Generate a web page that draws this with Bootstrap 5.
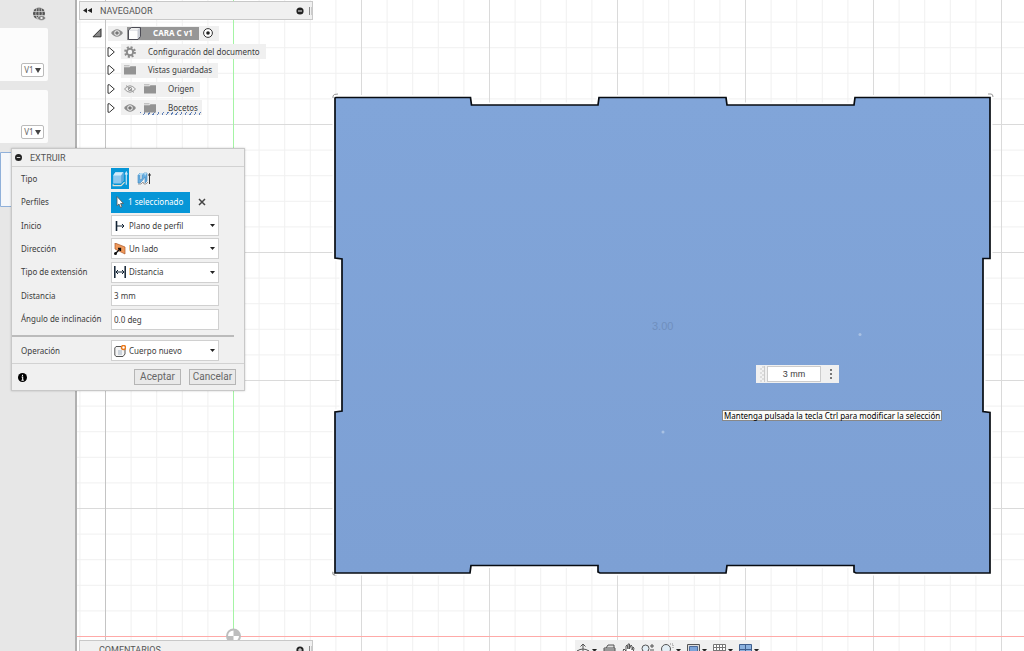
<!DOCTYPE html>
<html lang="es">
<head>
<meta charset="utf-8">
<meta name="viewport" content="width=device-width, initial-scale=1">
<title>CARA C v1</title>
<link href="https://cdn.jsdelivr.net/npm/bootstrap@5.3.0/dist/css/bootstrap.min.css" rel="stylesheet">
<style>
  :root { --edge: #c8c8c8; --face: #f0f0f0; --accent: #0696d7; --ink: #3c3c3c; }
  body { font-family: "Noto Sans", "Liberation Sans", sans-serif; font-size: 8px; line-height: 12px; color: var(--ink); background: #fff; }
  svg { display: block; flex: none; }
  button, input, select { font: inherit; color: inherit; }
  .bare { background: none; border: 0; padding: 0; }
  .data-panel { width: 77px; background: #e7e7e7; border-right: 2px solid #b0b0b0; padding-top: 7px; }
  .globe { margin: 0 0 6px 32px; }
  .design-tile { width: 48px; height: 53px; background: #fcfcfc; border-radius: 0 2px 2px 0; margin-bottom: 9px; padding: 0 4px 4px 0; }
  .design-tile.active-tile { width: 60px; height: 55px; background: #f5f7fa; border: 1px solid #8fb0da; }
  .version { width: 23px; height: 14px; border: 1px solid #bbb; border-radius: 2px; background: #fff; color: #666; gap: 1px; }
  .scene { inset: 0; width: 100%; height: 100%; }
  .browser { margin-top: 1px; }
  .strip { width: 234px; height: 19px; margin-left: 2px; padding: 0 0 0 3px; background: var(--face); border: 1px solid var(--edge); color: #555; }
  .strip, .palette-head { font-family: Roboto, sans-serif; font-size: 9px; }
  .grip { width: 3px; height: 8px; border-left: 1px solid #888; border-right: 1px solid #ccc; margin-left: 5px; }
  .tree { list-style: none; margin: 4px 0 0 15px; padding: 0; display: grid; grid-template-rows: repeat(5, 1fr); height: 93px; }
  .tree li { display: flex; align-items: center; }
  .tree .chip { display: flex; align-items: center; height: 15px; background: var(--face); padding: 0 6px 0 3px; margin-left: 6px; }
  .tree .child { margin-left: 15px; }
  .root-name { background: #969696; color: #fff; font-weight: 700; height: 13px; padding-right: 6px; }
  .bocetos { align-self: stretch; background: repeating-linear-gradient(120deg, #5f80b8 0 1px, transparent 1px 4px) bottom / 100% 3px no-repeat; }
  .palette { left: 11px; top: 148px; width: 234px; background: var(--face); border: 1px solid var(--edge); box-shadow: 0 0 2px #0003; z-index: 5; }
  .palette-head { height: 18px; padding-left: 3px; border-bottom: 1px solid #d2d2d2; color: #555; }
  .fields { display: grid; grid-template-rows: repeat(7, 1fr); height: 164px; }
  .field { display: grid; grid-template-columns: 90px 108px; align-items: center; padding-left: 9px; }
  .box { height: 21px; border: 1px solid #d0d0d0; background: #fff; padding: 0 2px; width: 100%; display: flex; align-items: center; border-radius: 0; }
  .box select { appearance: none; border: 0; padding: 0 0 0 3px; flex: 1; min-width: 0; height: 16px; background: #fff url("data:image/svg+xml,%3Csvg xmlns='http://www.w3.org/2000/svg' viewBox='0 0 5 3'%3E%3Cpath d='M0 0h5L2.5 3z' fill='%23222'/%3E%3C/svg%3E") right 1px center / 5px 3px no-repeat; }
  .rule-bar { height: 2px; background: #bbb; width: 222px; margin-bottom: 3px; }
  .tool-on { background: var(--accent); width: 18px; height: 21px; }
  .pick { background: var(--accent); color: #fff; width: 79px; height: 21px; padding-left: 5px; }
  .palette-foot { height: 27px; border-top: 1px solid #d2d2d2; margin-top: 2px; padding: 0 8px 0 6px; }
  .act { font: 10px/12px Roboto, sans-serif; height: 16px; width: 47px; border: 1px solid #b5b5b5; background: #e9e9e9; padding: 0; color: #666; }
  .bottom-edge { height: 11px; overflow: hidden; }
  .view-tools { background: var(--face); height: 20px; margin-left: 262px; padding: 3px 1px; gap: 6px; }
  .view-tools button { gap: 2px; }
  .dim-entry { left: 679px; top: 365px; width: 83px; height: 18px; background: #f0f0f0; padding-left: 4px; font-family: "Liberation Sans", sans-serif; font-size: 9px; }
  .dim-entry input { width: 54px; height: 16px; border: 1px solid #ccc; text-align: center; padding: 0; background: #fff; margin-left: 2px; }
  .dots { width: 5px; height: 16px; background: repeating-conic-gradient(#ddd 0 25%, #f2f2f2 0 50%) 0 0 / 4px 4px; border-right: 1px solid #ccc; }
  .hint { left: 645px; top: 410px; border: 1px solid #888; background: #fbfbf8; color: #000; font-size: 8px; line-height: 9px; padding: 0 1px; height: 11px; white-space: nowrap; }
</style>
<script src="https://cdn.jsdelivr.net/npm/bootstrap@5.3.0/dist/js/bootstrap.bundle.min.js"></script>
</head>
<body>
<svg width="0" height="0" class="position-absolute" aria-hidden="true">
  <defs>
    <symbol id="eye" viewBox="0 0 12 8"><path d="M0 4Q6-3.500 12 4Q6 11.500 0 4z" fill="#8c8c8c"/><circle cx="6" cy="4" r="2.700" fill="#eee"/><circle cx="6" cy="4" r="1.800" fill="#777"/></symbol>
    <symbol id="eye-off" viewBox="0 0 12 8"><path d="M.5 4Q6-2.500 11.500 4Q6 10.500 .5 4zM2 .5l8 7" fill="none" stroke="#999"/><circle cx="6" cy="4" r="1.700" fill="none" stroke="#999"/></symbol>
    <symbol id="folder" viewBox="0 0 13 10"><path d="M0 0h6v1H0zM0 2h6l1-1h6v9H0z" fill="#939393"/></symbol>
    <symbol id="tri" viewBox="0 0 8 10"><path d="M1 .8h1.500L7.300 5 2.500 9.200H1z" fill="#fff" stroke="#333"/></symbol>
    <symbol id="down" viewBox="0 0 5 3"><path d="M0 0h5L2.500 3z" fill="#222"/></symbol>
  </defs>
</svg>
<div class="d-flex vh-100 position-relative overflow-hidden">
  <aside class="data-panel flex-shrink-0">
    <svg class="globe" width="15" height="15" viewBox="0 0 15 15"><circle cx="7" cy="6.500" r="6" fill="#555"/><path d="M1 4.500h12M1 8.500h12M5 .5q-2.500 6 0 12M9 .5q2.500 6 0 12M7 0v13" stroke="#ddd" stroke-width=".7" fill="none"/><path d="M5 11q4.500-5 9 0q-4.500 5-9 0z" fill="#777" stroke="#e7e7e7" stroke-width=".7"/><circle cx="9.500" cy="11" r="1.200" fill="#eee"/></svg>
    <div class="design-tile d-flex align-items-end justify-content-end"><button class="version p-0 d-flex align-items-center justify-content-center">V1<svg width="6" height="5" viewBox="0 0 6 5"><path d="M0 0h6L3 5z" fill="#444"/></svg></button></div>
    <div class="design-tile d-flex align-items-end justify-content-end"><button class="version p-0 d-flex align-items-center justify-content-center">V1<svg width="6" height="5" viewBox="0 0 6 5"><path d="M0 0h6L3 5z" fill="#444"/></svg></button></div>
    <div class="design-tile active-tile"></div>
  </aside>

  <main class="flex-grow-1 position-relative d-flex flex-column overflow-hidden">
    <svg class="scene position-absolute" role="img" aria-label="Boceto">
      <defs>
        <pattern id="minor" x="156" y="636" width="25.600" height="25.600" patternUnits="userSpaceOnUse"><path d="M.5 0v25.600M0 .5h25.600" stroke="#f0f0f0"/></pattern>
        <pattern id="major" x="156" y="636" width="128" height="128" patternUnits="userSpaceOnUse"><path d="M.5 0v128M0 .5h128" stroke="#dadada"/></pattern>
        <linearGradient id="sheet" x1="0" y1="0" x2="0" y2="1"><stop offset="0" stop-color="#81a5d9"/><stop offset="1" stop-color="#7da0d4"/></linearGradient>
      </defs>
      <rect width="100%" height="100%" fill="url(#minor)"/>
      <rect width="100%" height="100%" fill="url(#major)"/>
      <path d="M28.500 0v651" stroke="#c4c4c4"/>
      <path d="M156.500 0v636" stroke="#a4f4a4"/>
      <path d="M0 636.500h3000" stroke="#ffaaa8"/>
      <circle cx="156.500" cy="636" r="7.500" fill="#bdbdbd"/><path d="M156.500 636v-5.500a5.500 5.500 0 0 0-5.500 5.500zM156.500 636v5.500a5.500 5.500 0 0 0 5.500-5.500z" fill="#fff"/>
      <g fill="#fff" stroke="#999"><circle cx="258" cy="573" r="2.500"/></g>
      <path d="M258 97.500H393.500L394.500 105H521L522 97.500H649L650 105H777L778 97.500H913V258.500H906V411.500L913 412.500V572.500L912 573H779L777 572V565.500H650L649 572.500L648 573H523L521 572V565.500H394L393 572.500L392 573H258V412L265 411V259L258 258z" fill="url(#sheet)" stroke="#fff" stroke-width="5"/>
      <path d="M259 97.500H393.500L394.500 105H521L522 97.500H649L650 105H777L778 97.500H913V258.500H906V411.500L913 412.500V573H779L777 572V565.500H650L649 573H523L521 572V565.500H394L393 573H258V412L265 411V259L258 258V98z" fill="url(#sheet)" stroke="#080c12" stroke-width="1.700"/>
      <path d="M256 98v-2q0-2 5-2M911 94h3q2 0 2 3M256 572q-1 3 2 3" stroke="#999" fill="none"/>
      <path d="M586 432V565" stroke="#83a5d6" opacity=".4"/>
      <circle cx="783" cy="334.500" r="1.500" fill="#a9c1e3"/><circle cx="586" cy="432" r="1.500" fill="#a9c1e3"/>
      <text x="575" y="330" font-size="11" font-family="Liberation Sans, sans-serif" fill="#6f8fbe">3.00</text>
    </svg>

    <section class="browser position-relative">
      <header class="strip d-flex align-items-center">
        <button class="bare" aria-label="Contraer"><svg width="9" height="5" viewBox="0 0 9 5"><path d="M4 0v5L0 2.500zM9 0v5L4.500 2.500z" fill="#222"/></svg></button>
        <span class="ms-2 ps-0 flex-grow-1">NAVEGADOR</span>
        <svg width="8" height="8" viewBox="0 0 8 8"><circle cx="4" cy="4" r="3.600" fill="#222"/><path d="M2 4h4" stroke="#eee"/></svg><span class="grip"></span>
      </header>
      <ul class="tree">
        <li><svg width="10" height="10" viewBox="0 0 10 10"><path d="M9 .8v8H1z" fill="#888" stroke="#333"/></svg>
          <div class="chip"><svg class="me-1" width="12" height="8"><use href="#eye"/></svg><span class="root-name d-flex align-items-center"><svg class="me-2" width="14" height="13" viewBox="0 0 14 13"><path d="M1.500 3l3-2.500h9v9L11 12.500H1.500z" fill="#c9ccd4" stroke="#4c4c55"/><path d="M2 3.500h8.500V12H2z" fill="#fdfdfd"/><path d="M2.500 3l2-2h8l-2 2z" fill="#eee"/></svg><span class="ms-1">CARA C v1</span></span><svg class="ms-1" width="10" height="10" viewBox="0 0 10 10"><circle cx="5" cy="5" r="4.400" fill="#fff" stroke="#333"/><circle cx="5" cy="5" r="1.800" fill="#222"/></svg></div></li>
        <li class="child"><svg width="8" height="10"><use href="#tri"/></svg><div class="chip"><svg width="12" height="12" viewBox="0 0 12 12"><circle cx="6" cy="6" r="4.800" fill="none" stroke="#8c8c8c" stroke-width="2.200" stroke-dasharray="2 1.770"/><circle cx="6" cy="6" r="3.200" fill="#f5f5f5" stroke="#8c8c8c" stroke-width="2"/></svg><span class="ps-2 ms-1">Configuración del documento</span></div></li>
        <li class="child"><svg width="8" height="10"><use href="#tri"/></svg><div class="chip"><svg width="12" height="10"><use href="#folder"/></svg><span class="ps-2 ms-1">Vistas guardadas</span></div></li>
        <li class="child"><svg width="8" height="10"><use href="#tri"/></svg><div class="chip"><svg width="12" height="8"><use href="#eye-off"/></svg><svg class="ms-2" width="12" height="10"><use href="#folder"/></svg><span class="ps-2 ms-1">Origen</span></div></li>
        <li class="child"><svg width="8" height="10"><use href="#tri"/></svg><div class="chip pe-0"><svg width="12" height="8"><use href="#eye"/></svg><span class="bocetos d-flex align-items-center ms-1 ps-1"><svg width="12" height="10"><use href="#folder"/></svg><span class="ps-2 ms-1 pe-1">Bocetos</span></span></div></li>
      </ul>
    </section>

    <div class="bottom-edge position-relative d-flex align-items-start mt-auto">
      <header class="strip d-flex align-items-center flex-shrink-0"><span class="flex-grow-1 ps-3">COMENTARIOS</span><svg width="8" height="8" viewBox="0 0 8 8"><circle cx="4" cy="4" r="3.600" fill="#222"/><path d="M2 4h4M4 2v4" stroke="#eee"/></svg><span class="grip"></span></header>
      <div class="view-tools d-flex align-items-start flex-shrink-0">
        <button class="bare d-flex align-items-center" aria-label="Órbita"><svg width="14" height="14" viewBox="0 0 14 14"><path d="M7 1v12M4.500 3.500L7 1l2.500 2.500M1 8q6-4 12 0q-6 3-12 0" fill="none" stroke="#555"/></svg><svg width="5" height="3"><use href="#down"/></svg></button>
        <button class="bare" aria-label="Mirar a"><svg width="13" height="14" viewBox="0 0 13 14"><path d="M1 5h11v8H1zM3 5l2-3h6v3M1 7h11" fill="#ddd" stroke="#555"/></svg></button>
        <button class="bare" aria-label="Encuadre"><svg width="13" height="14" viewBox="0 0 13 14"><path d="M4 12L1 7l1-1 2 2V3l1-1 1 4V1h1.500v5L9 2l1 1v4l1-3 1 1-1 5-2 3z" fill="#fff" stroke="#555"/></svg></button>
        <button class="bare" aria-label="Zoom"><svg width="13" height="14" viewBox="0 0 13 14"><circle cx="4.500" cy="5.500" r="3.500" fill="#e3eef5" stroke="#555"/><path d="M7 8l4 4M9 3h4M11 1v4M9 7h4" stroke="#555"/></svg></button>
        <button class="bare d-flex align-items-center" aria-label="Ajustar"><svg width="14" height="14" viewBox="0 0 14 14"><circle cx="6" cy="6" r="4.500" fill="#e3eef5" stroke="#555"/><path d="M9 9l4 4" stroke="#555"/><path d="M10 1h3v4" stroke="#888" stroke-dasharray="1 1" fill="none"/></svg><svg width="5" height="3"><use href="#down"/></svg></button>
        <button class="bare d-flex align-items-center" aria-label="Visualización"><svg width="13" height="14" viewBox="0 0 13 14"><path d="M.5 1.500h12v10H.5z" fill="#ddd" stroke="#555"/><path d="M2.500 3.500h8v6h-8z" fill="#7ba3d8" stroke="#4c6b9b"/></svg><svg width="5" height="3"><use href="#down"/></svg></button>
        <button class="bare d-flex align-items-center" aria-label="Rejilla"><svg width="13" height="14" viewBox="0 0 13 14"><path d="M.5 1.500h12v11H.5zM3.500 1v12M6.500 1v12M9.500 1v12M0 4.500h13M0 7.500h13M0 10.500h13" fill="#fff" stroke="#777"/></svg><svg width="5" height="3"><use href="#down"/></svg></button>
        <button class="bare d-flex align-items-center" aria-label="Ventanas"><svg width="13" height="14" viewBox="0 0 13 14"><path d="M.5 1.500h12v10H.5zM6.500 1v11M0 6.500h13" fill="#8bb1de" stroke="#3f5f8e"/></svg><svg width="5" height="3"><use href="#down"/></svg></button>
      </div>
    </div>

    <div class="dim-entry position-absolute d-flex align-items-center"><span class="dots"></span><input value="3 mm" aria-label="Distancia de extrusión"><button class="bare ms-2" aria-label="Más"><svg width="4" height="12" viewBox="0 0 4 12"><path d="M1 1h2v2H1zM1 5h2v2H1zM1 9h2v2H1z" fill="#777"/></svg></button></div>
    <div class="hint position-absolute" role="tooltip">Mantenga pulsada la tecla Ctrl para modificar la selección</div>
  </main>

  <form class="palette position-absolute">
    <header class="palette-head d-flex align-items-center"><svg class="me-2" width="7" height="7" viewBox="0 0 8 8"><circle cx="4" cy="4" r="4" fill="#222"/><path d="M2 4h4" stroke="#eee"/></svg>EXTRUIR</header>
    <div class="fields">
      <div class="field"><span>Tipo</span><div class="d-flex align-items-center">
        <button type="button" class="bare tool-on d-flex align-items-center justify-content-center" aria-label="Extruir"><svg width="16" height="16" viewBox="0 0 14 14"><path d="M1 11.500v1.300h7l3-3" fill="none" stroke="#e4e0d0"/><path d="M1 4l2-3h7v7l-2 3H1z" fill="#8cc8ee"/><path d="M1 4l2-3h7L8 4z" fill="#d2ebfa"/><path d="M8 4l2-3v7l-2 3z" fill="#5faadc"/><path d="M12.500 12V2M11.500 3l1-2 1 2" stroke="#cfe9f8" fill="none"/></svg></button>
        <button type="button" class="bare ms-1 ps-1" aria-label="Extrusión fina"><svg width="14" height="14" viewBox="0 0 14 14"><path d="M1 12h3l2-2 1 2h2l2-2" fill="none" stroke="#999"/><path d="M1 3l2-2v7l2-1V3l2-2h3v8l-2 2V5L5 9l-2 2H1z" fill="#6aaee0" stroke="#3d87bf" stroke-width=".6"/><path d="M3 1h4L5 3H1zM7 1h3L8 4z" fill="#b5dcf3"/><path d="M12.500 12V2M11.500 3.500l1-2 1 2" stroke="#333" fill="none"/></svg></button></div></div>
      <div class="field"><span>Perfiles</span><div class="d-flex align-items-center"><button type="button" class="bare pick d-flex align-items-center"><svg class="me-1" width="8" height="12" viewBox="0 0 8 12"><path d="M1 .5v9.200l2-1.700 1.500 3.500 1.500-.7L4.600 7.500H7.500z" fill="#fff" stroke="#555" stroke-width=".8"/></svg>1 seleccionado</button><button type="button" class="bare ms-2" aria-label="Borrar selección"><svg width="8" height="8" viewBox="0 0 8 8"><path d="M1 1l6 6M7 1L1 7" stroke="#444" stroke-width="1.500"/></svg></button></div></div>
      <div class="field"><label for="inicio">Inicio</label><div class="box"><svg width="12" height="12" viewBox="0 0 12 12"><path d="M2.500 1v10" stroke="#123" stroke-width="1.600"/><path d="M3 6h7M8 4l2 2-2 2" stroke="#123" fill="none"/></svg><select id="inicio"><option>Plano de perfil</option></select></div></div>
      <div class="field"><label for="direccion">Dirección</label><div class="box"><svg width="12" height="12" viewBox="0 0 12 12"><path d="M1 0l10 4v7L1 6z" fill="#f09a5b" stroke="#a9582a" stroke-width=".7"/><path d="M1 11l5-5M4 5.500h2.500V8" stroke="#111" fill="none" stroke-width="1.300"/><circle cx="1.500" cy="10.500" r="1.500" fill="#111"/></svg><select id="direccion"><option>Un lado</option></select></div></div>
      <div class="field"><label for="extension">Tipo de extensión</label><div class="box"><svg width="12" height="12" viewBox="0 0 12 12"><path d="M.8 0v12M11.200 0v12" stroke="#123" stroke-width="1.500"/><path d="M2 6h8M4 4L2 6l2 2M8 4l2 2-2 2" stroke="#123" fill="none"/></svg><select id="extension"><option>Distancia</option></select></div></div>
      <div class="field"><label for="distancia">Distancia</label><input class="box" id="distancia" value="3 mm"></div>
      <div class="field"><label for="angulo">Ángulo de inclinación</label><input class="box" id="angulo" value="0.0 deg"></div>
    </div>
    <div class="rule-bar mt-1"></div>
    <div class="field"><label for="operacion">Operación</label><div class="box"><svg width="12" height="12" viewBox="0 0 12 12"><path d="M2 1.500h6l3 3V9l-2 2.500H2L.8 10V3z" fill="#f4f4f4" stroke="#555"/><path d="M4 5h4v5H4z" fill="#ccd3da"/><circle cx="9.500" cy="2.500" r="2" fill="#fff" stroke="#e87a1e" stroke-width="1.500"/></svg><select id="operacion"><option>Cuerpo nuevo</option></select></div></div>
    <footer class="palette-foot d-flex align-items-center"><svg width="9" height="9" viewBox="0 0 10 10"><circle cx="5" cy="5" r="5" fill="#000"/><path d="M5 2v1.300M4 4.500h1.200V8M3.800 8h2.600" stroke="#fff" stroke-width="1.200" fill="none"/></svg><button type="button" class="act ms-auto">Aceptar</button><button type="button" class="act ms-2">Cancelar</button></footer>
  </form>
</div>
</body>
</html>
